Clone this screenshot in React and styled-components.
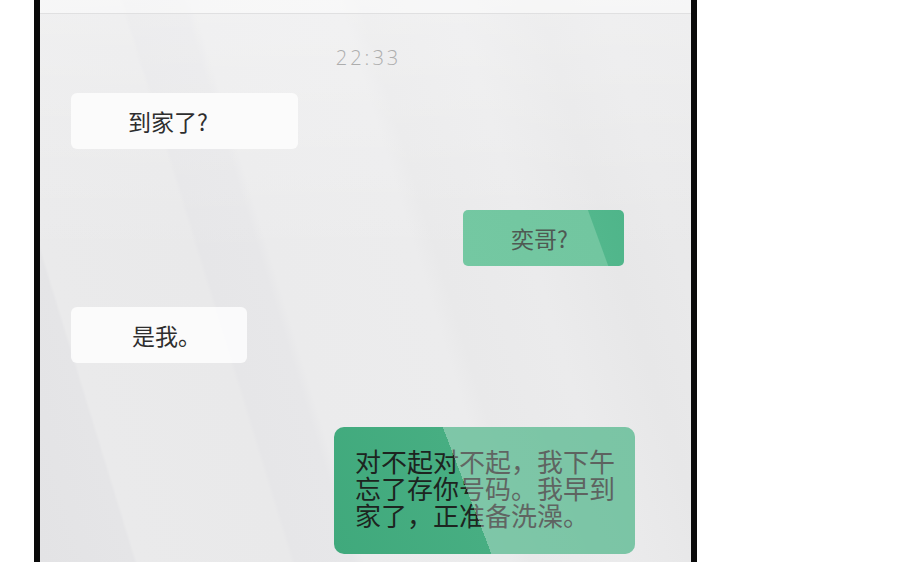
import React from "react";
import styled, { createGlobalStyle } from "styled-components";

const GlobalStyle = createGlobalStyle`
  html, body { margin: 0; padding: 0; background: #ffffff; overflow: hidden; }
  * { box-sizing: border-box; }
`;

const Page = styled.div`
  display: flex;
  height: 562px;
  padding-left: 34px;
  background: #ffffff;
`;

const Phone = styled.div`
  width: 663px;
  height: 562px;
  border-left: 6px solid #0a0a0a;
  border-right: 6px solid #0a0a0a;
  display: flex;
  flex-direction: column;
  overflow: hidden;
  background:
    linear-gradient(180deg, rgba(255,255,255,0.3) 0px, rgba(255,255,255,0) 260px),
    linear-gradient(73deg,
      #e3e3e5 0px, #e5e5e7 90px,
      #eaeaeb 93px, #e9e9ea 240px,
      #e6e6e8 244px, #e7e7e9 300px,
      #ebebec 310px, #ececed 450px,
      #e9e9ea 470px, #ebebec 560px,
      #e8e8e9 620px, #e7e7e8 640px,
      #e9e9ea 700px, #e8e8e9 786px);
`;

const Header = styled.div`
  height: 14px;
  flex: none;
  background: rgba(255,255,255,0.45);
  border-bottom: 1px solid #e0e0e1;
`;

const Time = styled.div`
  margin-top: 33px;
  padding-left: 6px;
  text-align: center;
  font-family: "Open Sans", "Liberation Sans", sans-serif;
  font-weight: 300;
  font-size: 20px;
  line-height: 22px;
  letter-spacing: 3px;
  color: #adadad;
`;

const Row = styled.div`
  display: flex;
  justify-content: ${(p) => (p.$side === "right" ? "flex-end" : "flex-start")};
  padding-left: ${(p) => (p.$side === "right" ? 0 : p.$inset)}px;
  padding-right: ${(p) => (p.$side === "right" ? p.$inset : 0)}px;
  margin-top: ${(p) => p.$gap}px;
`;

const Bubble = styled.div`
  width: ${(p) => p.$w}px;
  height: 56px;
  padding-left: ${(p) => p.$pad}px;
  display: flex;
  align-items: center;
  border-radius: 6px;
  font-family: "Noto Sans CJK SC", "Noto Sans", sans-serif;
  font-size: 23px;
  line-height: 23px;
`;

const WhiteBubble = styled(Bubble)`
  background: rgba(252,252,252,0.92);
  color: #2e2e2e;
`;

const GreenBubble = styled(Bubble)`
  border-radius: 5px;
  color: #4f5953;
  background: linear-gradient(70deg, #74c8a2 0px, #72c6a0 136px, #52b78c 137px, #4fb58a 100%);
`;

const LongBubble = styled.div`
  position: relative;
  width: 301px;
  height: 127px;
  padding: 20px 19px 0 21px;
  border-radius: 10px;
  overflow: hidden;
  background: linear-gradient(69deg, #40a97c 0px, #47ae82 147px);
  font-family: "Noto Sans CJK SC", "Noto Sans", sans-serif;
  font-size: 26px;
  line-height: 27px;
  color: #1d2420;

  &::after {
    content: "";
    position: absolute;
    inset: 0;
    pointer-events: none;
    background: linear-gradient(69deg, rgba(255,255,255,0) 147px, rgba(255,255,255,0.3) 147px, rgba(255,255,255,0.28) 100%);
  }
`;

const Line = styled.span`
  display: block;
  white-space: nowrap;
`;

export default function App() {
  return (
    <>
      <GlobalStyle />
      <Page>
        <Phone>
          <Header />
          <Time>22:33</Time>
          <Row $side="left" $inset={31} $gap={24}>
            <WhiteBubble $w={227} $pad={57}>到家了?</WhiteBubble>
          </Row>
          <Row $side="right" $inset={67} $gap={61}>
            <GreenBubble $w={161} $pad={48}>奕哥?</GreenBubble>
          </Row>
          <Row $side="left" $inset={31} $gap={41}>
            <WhiteBubble $w={176} $pad={61}>是我。</WhiteBubble>
          </Row>
          <Row $side="right" $inset={56} $gap={64}>
            <LongBubble>
              <Line>对不起对不起，我下午</Line>
              <Line>忘了存你号码。我早到</Line>
              <Line>家了，正准备洗澡。</Line>
            </LongBubble>
          </Row>
        </Phone>
      </Page>
    </>
  );
}
